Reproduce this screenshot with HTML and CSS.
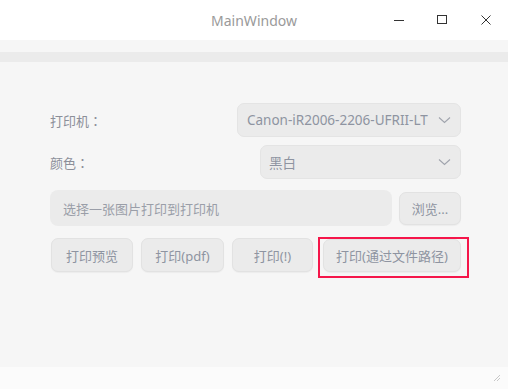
FILE: index.html
```html
<!DOCTYPE html>
<html>
<head>
<meta charset="utf-8">
<link rel="stylesheet" href="styles.css">
</head>
<body>
<div class="window">
  <div class="titlebar">
    <div class="title">MainWindow</div>
    <div class="controls">
      <span class="ctl"><svg width="12" height="12" viewBox="0 0 12 12"><path d="M1 6.5H11" stroke="#333" stroke-width="1"/></svg></span>
      <span class="ctl"><svg width="12" height="12" viewBox="0 0 12 12"><rect x="1.5" y="1.5" width="9" height="8" fill="none" stroke="#333" stroke-width="1"/></svg></span>
      <span class="ctl"><svg width="12" height="12" viewBox="0 0 12 12"><path d="M1.5 1.5L10.5 10.5M10.5 1.5L1.5 10.5" stroke="#333" stroke-width="1"/></svg></span>
    </div>
  </div>
  <div class="menubar"></div>
  <div class="toolbar"></div>
  <div class="central">
    <div class="row row1">
      <span class="label">打印机<span class="colon">：</span></span>
      <div class="combo combo-printer"><span>Canon-iR2006-2206-UFRII-LT</span><svg class="chev" width="13" height="8" viewBox="0 0 13 8"><path d="M1 1.5L6.5 6.5L12 1.5" fill="none" stroke="#a0a4ad" stroke-width="1.1"/></svg></div>
    </div>
    <div class="row row2">
      <span class="label">颜色<span class="colon">：</span></span>
      <div class="combo combo-color"><span>黑白</span><svg class="chev" width="13" height="8" viewBox="0 0 13 8"><path d="M1 1.5L6.5 6.5L12 1.5" fill="none" stroke="#a0a4ad" stroke-width="1.1"/></svg></div>
    </div>
    <div class="row row3">
      <div class="lineedit">选择一张图片打印到打印机</div>
      <div class="btn btn-browse">浏览...</div>
    </div>
    <div class="row row4">
      <div class="btn b1">打印预览</div>
      <div class="btn b2">打印(pdf)</div>
      <div class="btn b3">打印(!)</div>
      <div class="btn b4">打印(通过文件路径)<span class="highlight"></span></div>
    </div>
  </div>
  <div class="statusbar">
    <svg class="grip" width="10" height="10" viewBox="0 0 10 10"><path d="M9 3L3 9M9 6L6 9" stroke="#c8c8c8" stroke-width="1"/></svg>
  </div>
</div>
</body>
</html>
```

FILE: styles.css
```css
html, body {
  margin: 0;
  padding: 0;
  background: #f6f6f6;
}
.window {
  width: 508px;
  height: 389px;
  display: flex;
  flex-direction: column;
  font-family: "Noto Sans", "Noto Sans CJK SC", sans-serif;
  font-size: 13px;
  color: #8e94a1;
  overflow: hidden;
}
.titlebar {
  height: 40px;
  background: #ffffff;
  position: relative;
  display: flex;
  align-items: center;
  justify-content: center;
  flex: none;
}
.title {
  font-family: "Noto Sans", sans-serif;
  font-size: 14px;
  color: #9a9a9a;
}
.controls {
  position: absolute;
  right: 0;
  top: 0;
  height: 40px;
  display: flex;
}
.ctl {
  width: 44px;
  height: 40px;
  display: flex;
  align-items: center;
  justify-content: center;
}
.ctl:first-child { width: 42px; }
.menubar {
  height: 12px;
  background: #f6f6f6;
  flex: none;
}
.toolbar {
  height: 10px;
  background: #ebebeb;
  flex: none;
}
.central {
  flex: 1;
  background: #f6f6f6;
  padding: 41px 47px 0 50px;
  display: flex;
  flex-direction: column;
}
.row {
  display: flex;
  align-items: center;
  justify-content: space-between;
}
.label {
  font-family: "Noto Sans CJK SC", sans-serif;
  color: #8c8f99;
}
.colon {
  font-family: "Noto Sans CJK TC", sans-serif;
}
.combo {
  height: 34px;
  box-sizing: border-box;
  border: 1px solid #e4e4e4;
  background: #ebebeb;
  border-radius: 7px;
  display: flex;
  align-items: center;
  justify-content: space-between;
  padding: 0 9px 0 9px;
  font-size: 13.5px;
}
.combo-printer { width: 224px; }
.combo-color { width: 201px; padding-left: 8px; }
.row2 { margin-top: 8px; }
.row3 { margin-top: 11px; }
.lineedit {
  width: 342px;
  height: 36px;
  box-sizing: border-box;
  background: #ebebeb;
  border-radius: 8px;
  display: flex;
  align-items: center;
  padding-left: 13px;
  color: #9a9ea8;
}
.btn {
  box-sizing: border-box;
  height: 34px;
  background: #ebebeb;
  border: 1px solid #e2e2e2;
  border-radius: 7px;
  display: flex;
  align-items: center;
  justify-content: center;
  color: #8e94a1;
  box-shadow: 0 1px 1px rgba(0,0,0,0.04);
}
.btn-browse { width: 62px; height: 33px; }
.row4 {
  margin-top: 12px;
  justify-content: flex-start;
}
.b1 { width: 82px; margin-left: 1px; }
.b2 { width: 83px; margin-left: 8px; }
.b3 { width: 81px; margin-left: 8px; }
.b4 { width: 138px; margin-left: 10px; position: relative; height: 33px; }
.highlight {
  position: absolute;
  left: -6px;
  top: -3px;
  width: 151px;
  height: 41px;
  box-sizing: border-box;
  border: 2px solid #f5164a;
}
.statusbar {
  flex: none;
  height: 22px;
  background: #fbfbfb;
  position: relative;
}
.grip {
  position: absolute;
  right: 7px;
  bottom: 7px;
}
```
